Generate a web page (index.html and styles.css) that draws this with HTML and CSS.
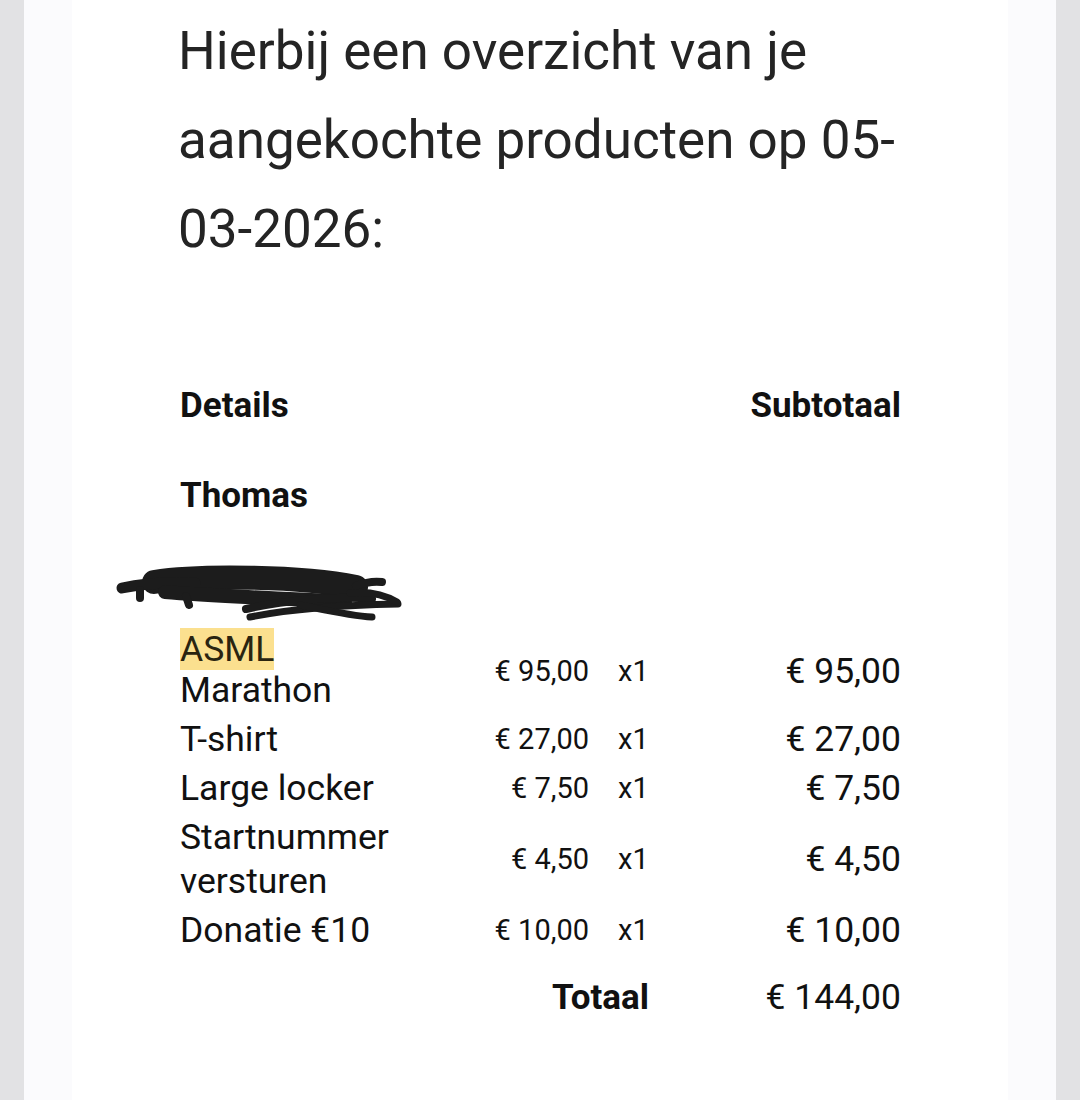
FILE: index.html
```html
<!DOCTYPE html>
<html lang="nl">
<head>
    <meta charset="UTF-8">
    <meta name="viewport" content="width=device-width, initial-scale=1.0">
    <title>Overzicht bestelling</title>
    <link rel="stylesheet" href="styles.css">
</head>
<body>
    <div class="outer">
        <div class="frame">
            <div class="card">
                <h1 class="intro">Hierbij een overzicht van je aangekochte producten op 05-<wbr>03-2026:</h1>

                <table class="order">
                    <colgroup>
                        <col class="col-name">
                        <col class="col-price">
                        <col class="col-qty">
                        <col class="col-sub">
                    </colgroup>
                    <thead>
                        <tr>
                            <th colspan="3" class="left">Details</th>
                            <th class="right">Subtotaal</th>
                        </tr>
                    </thead>
                    <tbody>
                        <tr class="person">
                            <td colspan="4">Thomas</td>
                        </tr>
                        <tr class="redacted">
                            <td colspan="4">
                                <!-- scribbled out e-mail address -->
                                <svg class="scribble" viewBox="115 552 290 64" width="290" height="64">
                                    <g fill="none" stroke="#1c1c1c" stroke-linecap="round" stroke-linejoin="round">
                                        <path d="M154 574 C200 567 300 568 356 579" stroke-width="24"/>
                                        <path d="M122 580 C140 576 165 574 195 575" stroke-width="11"/>
                                        <path d="M165 584 C210 588 280 590 345 594" stroke-width="14"/>
                                        <path d="M140 582 L140 590" stroke-width="8"/>
                                        <path d="M186 588 L189 597" stroke-width="8"/>
                                        <path d="M246 601 C280 593 340 587 372 591" stroke-width="8"/>
                                        <path d="M250 609 C290 601 350 597 398 596" stroke-width="7"/>
                                        <path d="M300 597 C330 603 352 608 372 609" stroke-width="7"/>
                                        <path d="M356 578 C366 574 374 573 382 574" stroke-width="8"/>
                                        <path d="M350 585 C370 583 385 587 397 594" stroke-width="7"/>
                                    </g>
                                </svg>
                            </td>
                        </tr>
                        <tr class="item">
                            <td class="name"><span class="event"><mark>ASML</mark></span>Marathon</td>
                            <td class="price">€ 95,00</td>
                            <td class="qty">x1</td>
                            <td class="sub">€ 95,00</td>
                        </tr>
                        <tr class="item">
                            <td class="name">T-shirt</td>
                            <td class="price">€ 27,00</td>
                            <td class="qty">x1</td>
                            <td class="sub">€ 27,00</td>
                        </tr>
                        <tr class="item">
                            <td class="name">Large locker</td>
                            <td class="price">€ 7,50</td>
                            <td class="qty">x1</td>
                            <td class="sub">€ 7,50</td>
                        </tr>
                        <tr class="item">
                            <td class="name">Startnummer versturen</td>
                            <td class="price">€ 4,50</td>
                            <td class="qty">x1</td>
                            <td class="sub">€ 4,50</td>
                        </tr>
                        <tr class="item">
                            <td class="name">Donatie €10</td>
                            <td class="price">€ 10,00</td>
                            <td class="qty">x1</td>
                            <td class="sub">€ 10,00</td>
                        </tr>
                        <tr class="total">
                            <td colspan="3" class="total-label">Totaal</td>
                            <td class="sub">€ 144,00</td>
                        </tr>
                    </tbody>
                </table>
            </div>
        </div>
    </div>
</body>
</html>
```

FILE: styles.css
```css
body {
    margin: 0;
    background-color: #e2e2e4;
    font-family: 'Roboto', 'Noto Sans', sans-serif;
    color: #111;
}

.outer {
    padding: 0 24px;
}

.frame {
    background-color: #fbfbfd;
    padding: 0 48px;
}

.card {
    background-color: #fff;
    min-height: 1100px;
    padding: 7px 107px 0 108px;
    box-sizing: border-box;
}

.intro {
    margin: 0 0 0 -2px;
    font-size: 53px;
    font-weight: 400;
    line-height: 89px;
    color: #242424;
}

.order {
    width: 100%;
    margin-top: 110px;
    border-collapse: collapse;
    table-layout: fixed;
}

.col-name {
    width: 258px;
}

.col-price {
    width: 151px;
}

.col-qty {
    width: 61px;
}

.order th {
    padding: 0;
    font-size: 35px;
    font-weight: 700;
    line-height: 44px;
}

.left {
    text-align: left;
}

.right {
    text-align: right;
}

.person td {
    padding: 46px 0 0;
    font-size: 35px;
    font-weight: 700;
    line-height: 44px;
}

.redacted td {
    height: 110px;
    padding: 0;
    vertical-align: top;
}

.scribble {
    display: block;
    margin: 42px 0 0 -65px;
}

.item td {
    padding: 2px 0 3px;
    font-size: 35.5px;
    line-height: 44px;
    vertical-align: middle;
}

.event {
    display: block;
    line-height: 38px;
}

mark {
    background-color: #fbe08f;
    color: #2a2410;
}

.item .price {
    text-align: right;
    font-size: 29px;
}

.item .qty {
    padding-left: 29px;
    font-size: 29px;
}

.sub {
    text-align: right;
}

.total td {
    padding: 20px 0 0;
    font-size: 35.5px;
    line-height: 44px;
    vertical-align: baseline;
}

.total .total-label {
    text-align: right;
    font-weight: 700;
    font-size: 35px;
    padding-right: 1px;
}
```
